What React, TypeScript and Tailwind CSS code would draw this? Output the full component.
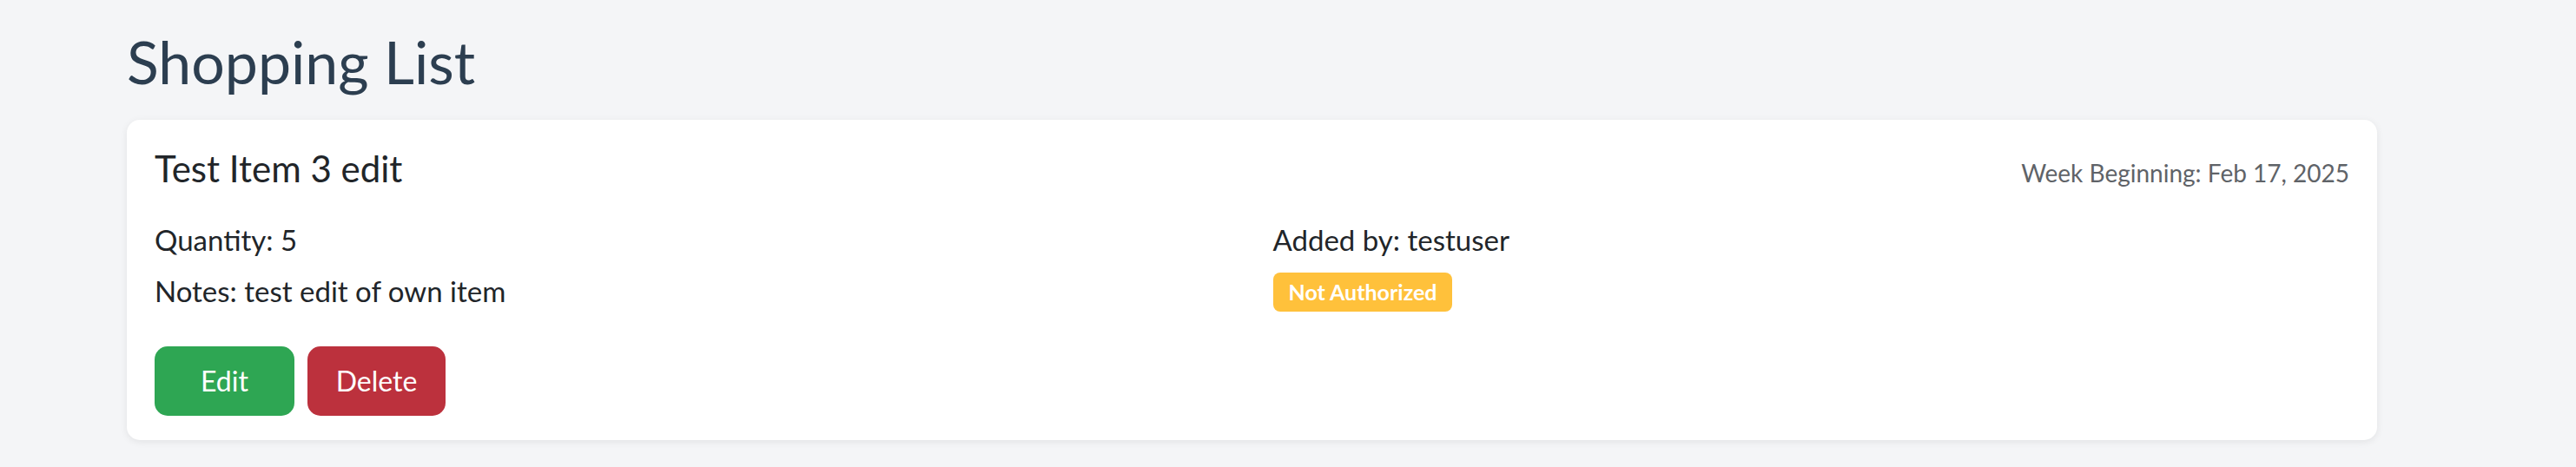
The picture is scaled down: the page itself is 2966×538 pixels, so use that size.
import React from 'react';

const font = { fontFamily: 'Lato, "Open Sans", sans-serif' };

const App: React.FC = () => {
  return (
    <div className="min-h-screen w-full bg-[#f4f5f7] pt-[32px] pl-[146px]" style={font}>
      <h1 className="text-[68px] leading-[78px] font-normal text-[#2c3e50] mb-[28px]">Shopping List</h1>

      <div className="w-[2591px] bg-white rounded-[15px] shadow-[0_2px_8px_rgba(0,0,0,0.08)] px-[32px] pt-[32px] pb-[28px]">
        <div className="flex items-center justify-between h-[48px]">
          <h2 className="text-[42px] leading-[48px] font-normal text-[#212529]">Test Item 3 edit</h2>
          <span className="text-[28px] leading-[40px] text-[#5f6368] mt-[10px]">Week Beginning: Feb 17, 2025</span>
        </div>

        <div className="grid grid-cols-2 gap-x-[48px] mt-[34px] text-[33px] leading-[48px] text-[#212529]">
          <div className="flex flex-col gap-[11px]">
            <p>Quantity: 5</p>
            <p>Notes: test edit of own item</p>
          </div>
          <div className="flex flex-col items-start gap-[14px]">
            <p>Added by: testuser</p>
            <span className="inline-flex items-center h-[45px] px-[18px] rounded-[8px] bg-[#ffc13b] text-white text-[25px] font-bold leading-none">
              Not Authorized
            </span>
          </div>
        </div>

        <div className="flex gap-[15px] mt-[40px]">
          <button className="w-[161px] h-[80px] rounded-[15px] bg-[#2ea653] text-white text-[32px]">Edit</button>
          <button className="w-[159px] h-[80px] rounded-[15px] bg-[#bc313d] text-white text-[32px]">Delete</button>
        </div>
      </div>
    </div>
  );
};

export default App;
